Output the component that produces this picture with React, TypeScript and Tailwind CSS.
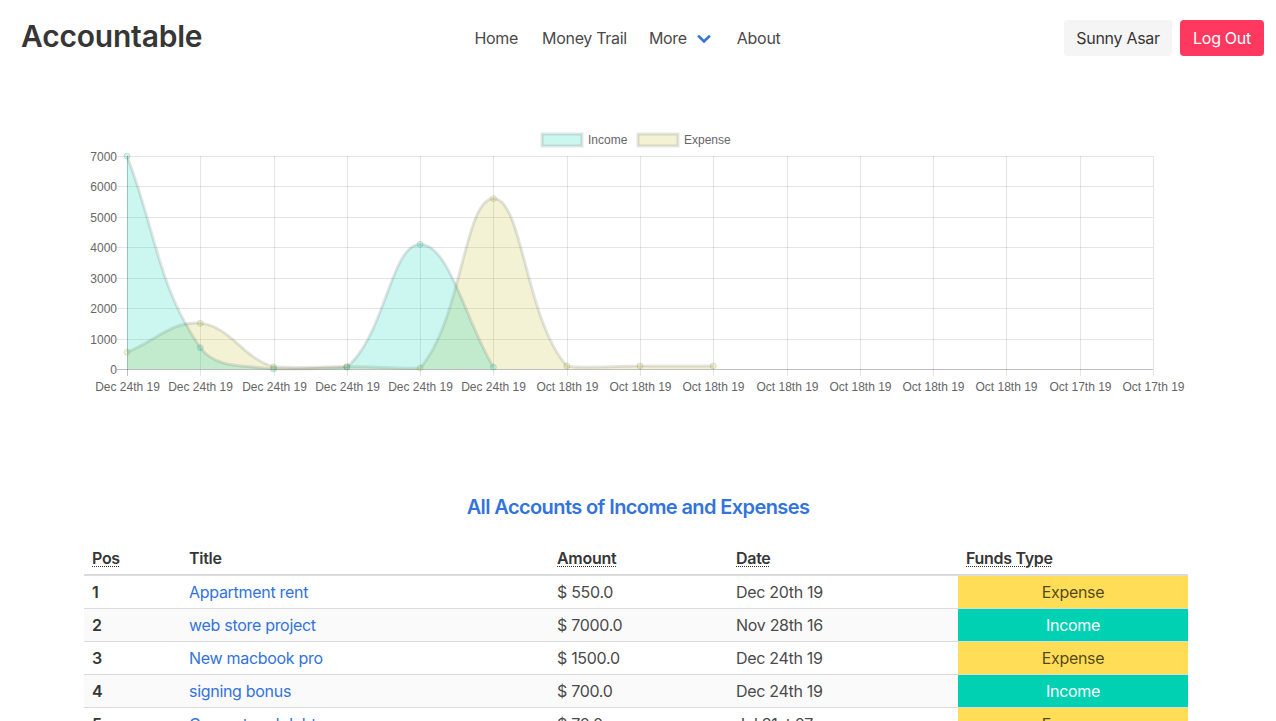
import React from "react";

type Pt = { x: number; y: number };

const LEFT = 127;
const RIGHT = 1153;
const TOP = 156;
const BOTTOM = 369;
const STEP = (RIGHT - LEFT) / 14;
const PER = (BOTTOM - TOP) / 7000;

const labels = [
  "Dec 24th 19",
  "Dec 24th 19",
  "Dec 24th 19",
  "Dec 24th 19",
  "Dec 24th 19",
  "Dec 24th 19",
  "Oct 18th 19",
  "Oct 18th 19",
  "Oct 18th 19",
  "Oct 18th 19",
  "Oct 18th 19",
  "Oct 18th 19",
  "Oct 18th 19",
  "Oct 17th 19",
  "Oct 17th 19",
];

const income = [7000, 700, 0, 60, 4100, 60];
const expense = [550, 1500, 70, 80, 30, 5600, 100, 100, 100];

const toPoints = (data: number[]): Pt[] =>
  data.map((v, i) => ({ x: LEFT + i * STEP, y: BOTTOM - v * PER }));

const clamp = (v: number, lo: number, hi: number) => Math.max(lo, Math.min(hi, v));

// chart.js style spline (tension 0.4, capped to chart area)
const splinePath = (pts: Pt[]) => {
  const t = 0.4;
  const cps = pts.map((cur, i) => {
    const prev = pts[i - 1] ?? cur;
    const next = pts[i + 1] ?? cur;
    const d01 = Math.hypot(cur.x - prev.x, cur.y - prev.y);
    const d12 = Math.hypot(next.x - cur.x, next.y - cur.y);
    let s01 = d01 / (d01 + d12);
    let s12 = d12 / (d01 + d12);
    if (isNaN(s01)) s01 = 0;
    if (isNaN(s12)) s12 = 0;
    const fa = t * s01;
    const fb = t * s12;
    return {
      prev: {
        x: clamp(cur.x - fa * (next.x - prev.x), LEFT, RIGHT),
        y: clamp(cur.y - fa * (next.y - prev.y), TOP, BOTTOM),
      },
      next: {
        x: clamp(cur.x + fb * (next.x - prev.x), LEFT, RIGHT),
        y: clamp(cur.y + fb * (next.y - prev.y), TOP, BOTTOM),
      },
    };
  });
  let d = `M ${pts[0].x} ${pts[0].y}`;
  for (let i = 1; i < pts.length; i++) {
    const a = cps[i - 1].next;
    const b = cps[i].prev;
    d += ` C ${a.x} ${a.y} ${b.x} ${b.y} ${pts[i].x} ${pts[i].y}`;
  }
  return d;
};

const Series = ({ data, fill }: { data: number[]; fill: string }) => {
  const pts = toPoints(data);
  const line = splinePath(pts);
  const area = `${line} L ${pts[pts.length - 1].x} ${BOTTOM} L ${pts[0].x} ${BOTTOM} Z`;
  return (
    <g>
      <path d={area} fill={fill} />
      <path d={line} fill="none" stroke="rgba(0,0,0,0.1)" strokeWidth={3} />
      {pts.map((p, i) => (
        <circle key={i} cx={p.x} cy={p.y} r={3} fill={fill} stroke="rgba(0,0,0,0.1)" strokeWidth={1} />
      ))}
    </g>
  );
};

const Chart = () => {
  const yTicks = [0, 1000, 2000, 3000, 4000, 5000, 6000, 7000];
  return (
    <svg
      width={1108}
      height={280}
      className="block tracking-normal"
      style={{ fontFamily: "'Liberation Sans', Arial, sans-serif" }}
    >
      <g transform="translate(-84,-120)">
        {/* legend */}
        <rect x={542} y={134} width={40} height={12} fill="rgba(0,209,178,0.2)" stroke="rgba(0,0,0,0.1)" strokeWidth={3} />
        <text x={588} y={144} fontSize={12} fill="#666">
          Income
        </text>
        <rect x={638} y={134} width={40} height={12} fill="rgba(195,190,45,0.2)" stroke="rgba(0,0,0,0.1)" strokeWidth={3} />
        <text x={684} y={144} fontSize={12} fill="#666">
          Expense
        </text>

        {/* grid */}
        {yTicks.map((v) => {
          const y = Math.round(BOTTOM - v * PER) + 0.5;
          return (
            <g key={v}>
              <line x1={LEFT - 10} x2={RIGHT} y1={y} y2={y} stroke={v === 0 ? "rgba(0,0,0,0.25)" : "rgba(0,0,0,0.1)"} />
              <text x={117} y={y + 4} fontSize={12} fill="#666" textAnchor="end">
                {v}
              </text>
            </g>
          );
        })}
        {labels.map((l, i) => {
          const x = Math.round(LEFT + i * STEP) + 0.5;
          return (
            <g key={i}>
              <line x1={x} x2={x} y1={TOP} y2={BOTTOM + 7} stroke={i === 0 ? "rgba(0,0,0,0.25)" : "rgba(0,0,0,0.1)"} />
              <text x={x} y={391} fontSize={12} fill="#666" textAnchor="middle">
                {l}
              </text>
            </g>
          );
        })}

        <Series data={expense} fill="rgba(195,190,45,0.2)" />
        <Series data={income} fill="rgba(0,209,178,0.2)" />
      </g>
    </svg>
  );
};

const rows = [
  { pos: 1, title: "Appartment rent", amount: "$ 550.0", date: "Dec 20th 19", type: "Expense" },
  { pos: 2, title: "web store project", amount: "$ 7000.0", date: "Nov 28th 16", type: "Income" },
  { pos: 3, title: "New macbook pro", amount: "$ 1500.0", date: "Dec 24th 19", type: "Expense" },
  { pos: 4, title: "signing bonus", amount: "$ 700.0", date: "Dec 24th 19", type: "Income" },
  { pos: 5, title: "Concert and debt", amount: "$ 70.0", date: "Jul 31st 07", type: "Expense" },
];

const Abbr = ({ children }: { children: React.ReactNode }) => (
  <span className="underline decoration-dotted decoration-1 underline-offset-2">{children}</span>
);

export default function App() {
  return (
    <div
      className="w-[1276px] h-[721px] overflow-hidden bg-white text-[#4a4a4a] tracking-[-0.3px]"
      style={{ fontFamily: "Inter, 'Noto Sans', sans-serif" }}
    >
      {/* Navbar */}
      <header className="flex items-center h-[76px] pl-[21px] pr-[12px]">
        <a href="#" className="text-[30px] font-semibold text-[#363636] tracking-[-0.2px] -mt-[4px]">
          Accountable
        </a>
        <nav className="flex items-center ml-[272px] text-[16px]">
          <a href="#">Home</a>
          <a href="#" className="ml-[24px]">Money Trail</a>
          <a href="#" className="ml-[22px] flex items-center">
            More
            <svg width="14" height="10" viewBox="0 0 14 10" className="ml-[10px] mt-[1px]">
              <polyline points="2,2.5 7,7.5 12,2.5" fill="none" stroke="#3273dc" strokeWidth="2.6" strokeLinecap="square" />
            </svg>
          </a>
          <a href="#" className="ml-[26px]">About</a>
        </nav>
        <div className="ml-auto flex items-center gap-[8px] text-[16px]">
          <button className="h-[36px] w-[108px] rounded-[4px] bg-[#f5f5f5] text-[#363636]">Sunny Asar</button>
          <button className="h-[36px] w-[84px] rounded-[4px] bg-[#ff3860] text-white">Log Out</button>
        </div>
      </header>

      {/* Chart */}
      <section className="mt-[44px] pl-[84px]">
        <Chart />
      </section>

      {/* Table */}
      <section className="mt-[92px] px-[84px]">
        <h2 className="text-center text-[20px] font-semibold text-[#3273dc] leading-[30px] tracking-[-0.6px]">
          All Accounts of Income and Expenses
        </h2>
        <table className="mt-[20px] w-[1104px] table-fixed border-collapse text-[16px] leading-[24px]">
          <colgroup>
            <col className="w-[97px]" />
            <col className="w-[368px]" />
            <col className="w-[179px]" />
            <col className="w-[230px]" />
            <col className="w-[230px]" />
          </colgroup>
          <thead>
            <tr className="border-b-2 border-[#dbdbdb] text-left text-[#363636]">
              <th className="px-[8px] py-[4px] font-semibold"><Abbr>Pos</Abbr></th>
              <th className="px-[8px] py-[4px] font-semibold">Title</th>
              <th className="px-[8px] py-[4px] font-semibold"><Abbr>Amount</Abbr></th>
              <th className="px-[8px] py-[4px] font-semibold"><Abbr>Date</Abbr></th>
              <th className="px-[8px] py-[4px] font-semibold"><Abbr>Funds Type</Abbr></th>
            </tr>
          </thead>
          <tbody>
            {rows.map((r, i) => (
              <tr key={r.pos} className={`border-b border-[#dbdbdb] ${i % 2 === 1 ? "bg-[#fafafa]" : "bg-white"}`}>
                <td className="px-[8px] py-[4px] font-semibold text-[#363636]">{r.pos}</td>
                <td className="px-[8px] py-[4px]">
                  <a href="#" className="text-[#3273dc]">{r.title}</a>
                </td>
                <td className="px-[8px] py-[4px]">{r.amount}</td>
                <td className="px-[8px] py-[4px]">{r.date}</td>
                <td
                  className={`px-[8px] py-[4px] text-center ${
                    r.type === "Income" ? "bg-[#00d1b2] text-white" : "bg-[#ffdd57] text-[rgba(0,0,0,0.7)]"
                  }`}
                >
                  {r.type}
                </td>
              </tr>
            ))}
          </tbody>
        </table>
      </section>
    </div>
  );
}
